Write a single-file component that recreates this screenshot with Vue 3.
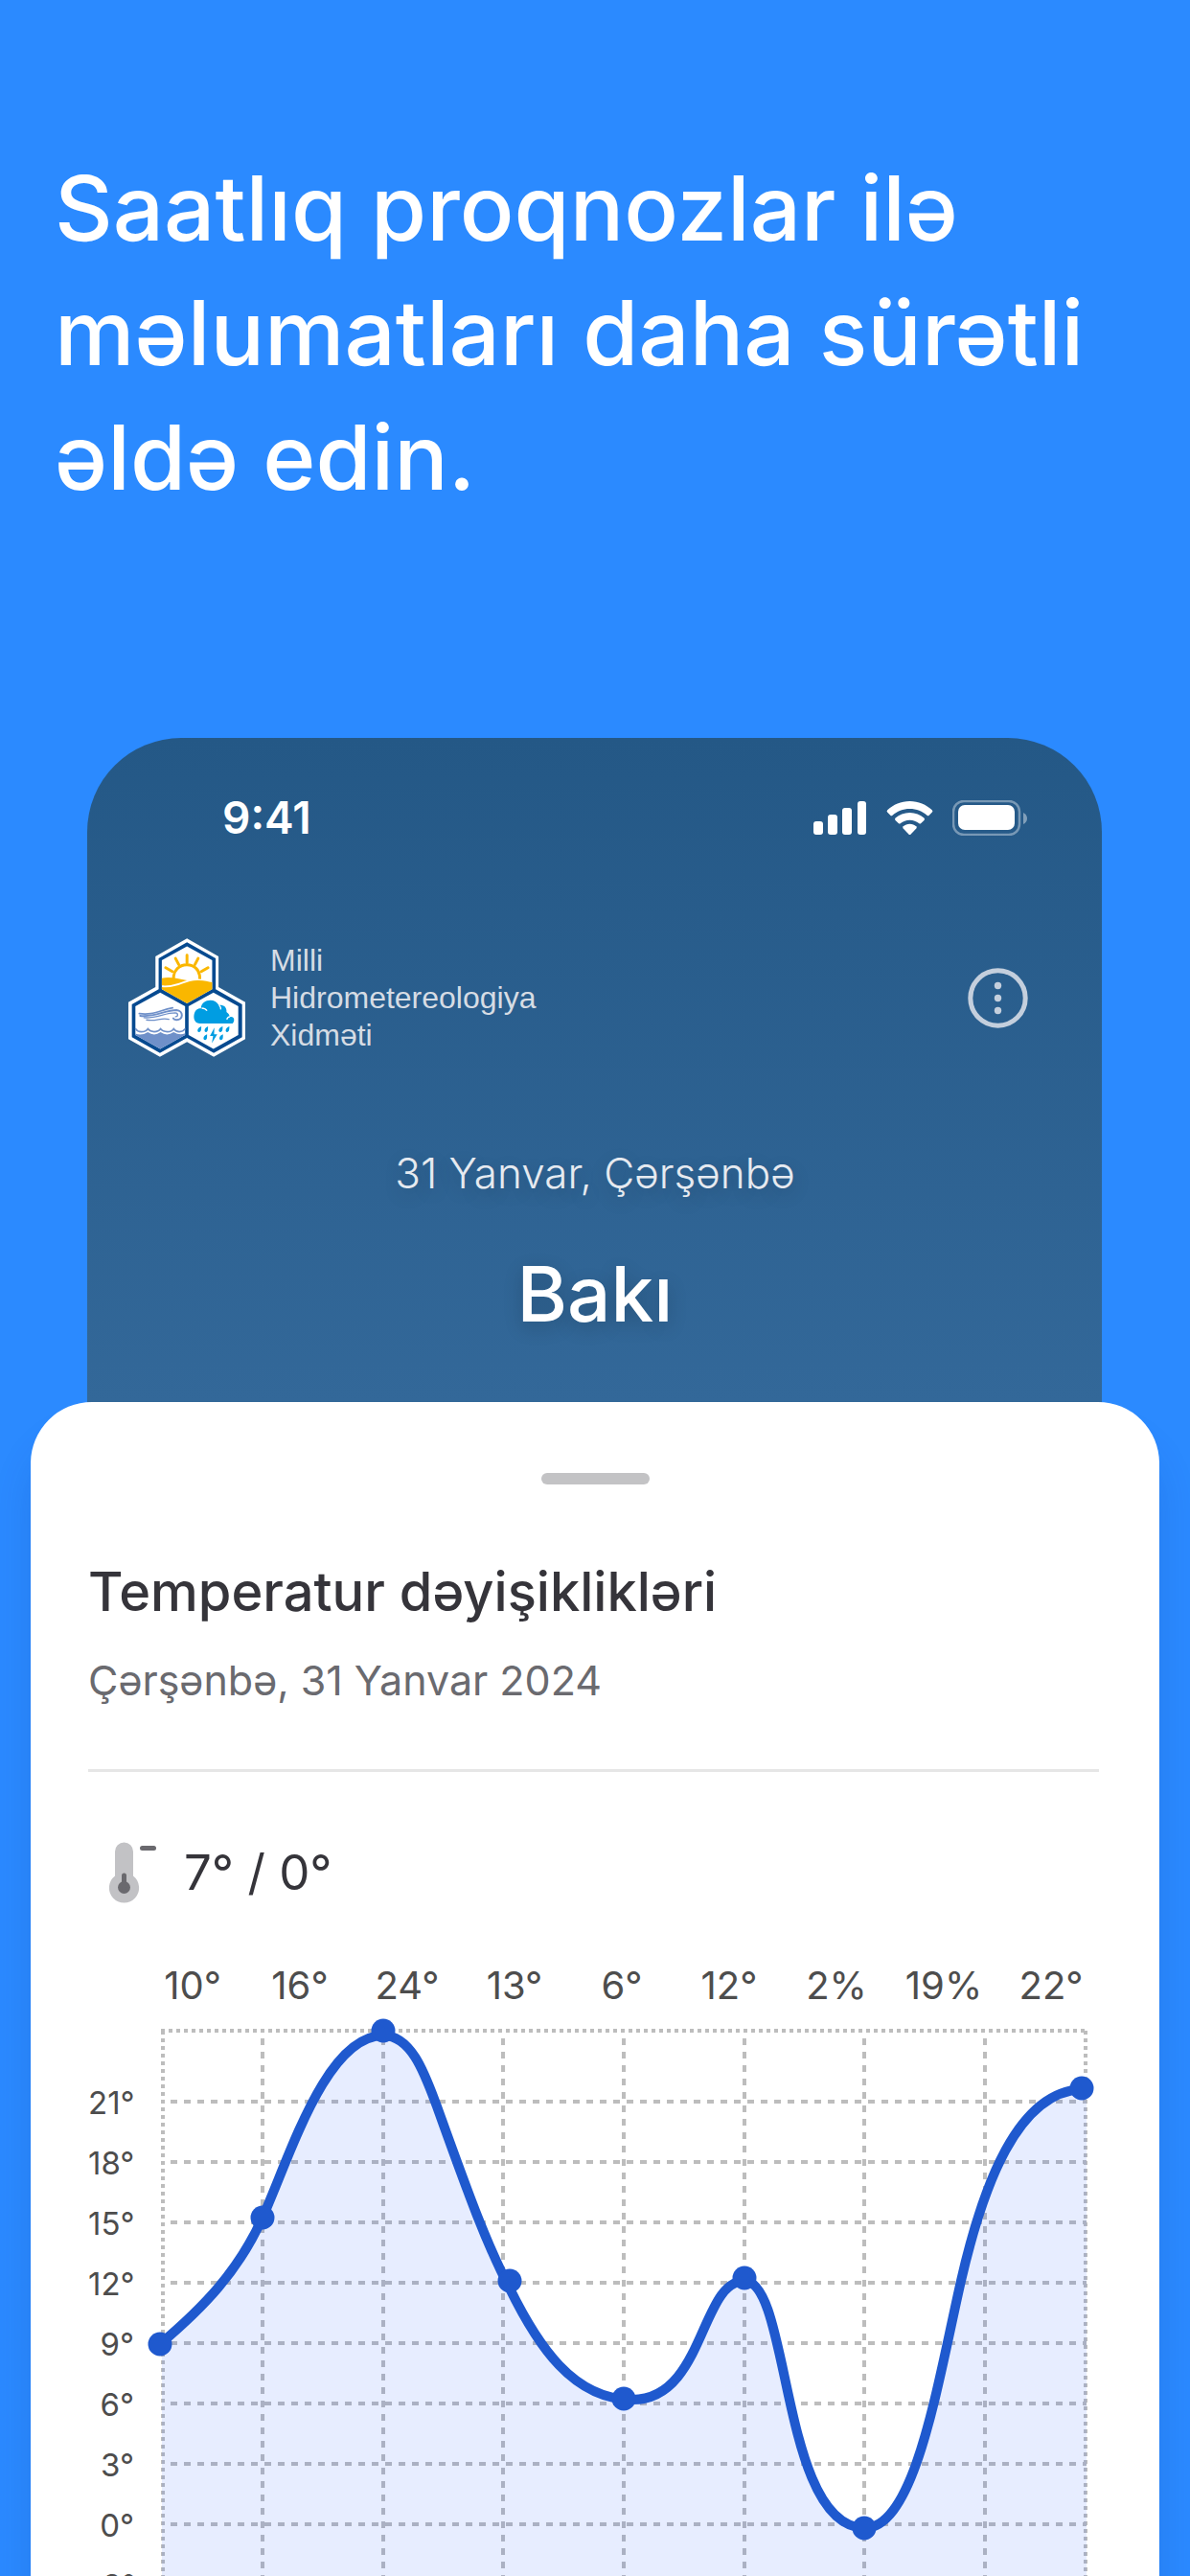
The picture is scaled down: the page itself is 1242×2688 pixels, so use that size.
<script setup>
import { ref } from 'vue'

const headline = ['Saatlıq proqnozlar ilə', 'məlumatları daha sürətli', 'əldə edin.']
const organisation = ['Milli', 'Hidrometereologiya', 'Xidməti']
const hours = ['10°', '16°', '24°', '13°', '6°', '12°', '2%', '19%', '22°']
const degrees = ['21°', '18°', '15°', '12°', '9°', '6°', '3°', '0°', '-3°']

const columns = [106, 232, 357, 483, 609, 734, 860]
const rows = [76, 139, 202, 265, 328, 391, 454, 517]
const points = [
  { x: -1, y: 329 },
  { x: 106, y: 197 },
  { x: 232, y: 2 },
  { x: 364, y: 263 },
  { x: 483, y: 386 },
  { x: 609, y: 260 },
  { x: 734, y: 521 },
  { x: 961, y: 62 }
]
const curve =
  'M-1 329 C44 291 81 253 106 197 C134 135 172 7 232 7 C262 7 276 49 288 81 ' +
  'C319 167 338 221 364 271 C393 330 430 387 492 387 C567 387 563 263 609 263 ' +
  'C657 263 647 519 734 521 C787 521 810 373 835 263 C858 163 894 66 961 63'
const area = curve + ' L966 63 L966 571 L1 571 L1 329 Z'

const menuOpen = ref(false)
const toggleMenu = () => {
  menuOpen.value = !menuOpen.value
}
</script>

<template>
  <main class="page">
    <h1 class="headline">
      <span v-for="line in headline" :key="line">{{ line }}</span>
    </h1>

    <section class="phone">
      <div class="status-bar">
        <time class="clock">9:41</time>
        <div class="status-icons">
          <svg width="56" height="37" viewBox="0 0 56 37" fill="#fff" aria-hidden="true">
            <rect x="0" y="22" width="10" height="14" rx="3" />
            <rect x="15" y="15" width="10" height="21" rx="3" />
            <rect x="30" y="8" width="10" height="28" rx="3" />
            <rect x="46" y="1" width="9" height="35" rx="3" />
          </svg>
          <svg width="49" height="37" viewBox="0 0 49 37" fill="#fff" aria-hidden="true">
            <path
              d="M24.500 1C33.500 1 41.700 4.500 47.800 10.300Q49 11.400 47.900 12.600L44.700 15.800Q43.600 16.800 42.500 15.800C37.800 11.500 31.500 9 24.500 9S11.200 11.500 6.500 15.800Q5.400 16.800 4.300 15.800L1.100 12.600Q0 11.400 1.200 10.300C7.300 4.500 15.500 1 24.500 1Z"
            />
            <path
              d="M24.500 13C30.300 13 35.500 15.100 39.400 18.600Q40.600 19.700 39.500 20.900L36.300 24.100Q35.200 25.100 34 24.100C31.500 22 28.200 20.700 24.500 20.700S17.500 22 15 24.100Q13.800 25.100 12.700 24.100L9.500 20.900Q8.400 19.700 9.600 18.600C13.500 15.100 18.700 13 24.500 13Z"
            />
            <path
              d="M24.500 24.800C27.200 24.800 29.400 25.700 31.200 27.200Q32.400 28.300 31.300 29.500L25.600 35.400Q24.500 36.500 23.400 35.400L17.700 29.500Q16.600 28.300 17.800 27.200C19.600 25.700 21.800 24.800 24.500 24.800Z"
            />
          </svg>
          <svg width="79" height="37" viewBox="0 0 79 37" aria-hidden="true">
            <rect x="1" y="1" width="69" height="35" rx="11" fill="none" stroke="#fff" stroke-opacity=".38" stroke-width="2.500" />
            <rect x="6" y="5" width="59" height="26" rx="7" fill="#fff" />
            <path d="M74 13Q78 15 78 19T74 25Z" fill="#fff" fill-opacity=".42" />
          </svg>
        </div>
      </div>

      <header class="app-header">
        <div class="brand">
          <svg class="logo" viewBox="43 57 367 372" aria-hidden="true">
            <path d="M227 57L326 114V210L410 257V373L311 429L227 382L142 429L43 373V257L128 210V114Z" fill="#fff" />
            <path
              d="M227 69L317 120V217L400 264V367L311 417L227 369L142 417L54 367V264L138 217V120Z"
              fill="#064a90"
            />
            <path d="M227 82L306 126V217L227 261L148 217V126Z" fill="#fff" />
            <path d="M143 227L221 270V360L143 404L65 360V270Z" fill="#fff" />
            <path d="M310 227L388 270V360L310 404L232 360V270Z" fill="#fff" />
            <g fill="none" stroke="#fab700" stroke-linecap="butt">
              <path d="M185 185C181 126 271 124 267 185" stroke-width="9" />
              <path
                d="M227 110V134M191 120L201 139M262 120L252 139M160 149L181 161M293 149L272 161"
                stroke-width="9"
                stroke-linecap="round"
              />
            </g>
            <path d="M148 182C178 176 198 185 227 189C203 196 177 208 148 205Z" fill="#fab700" />
            <path d="M148 210C195 215 223 189 260 189C279 188 293 193 306 195V217L227 261L148 217Z" fill="#fab700" />
            <g fill="none" stroke="#6f90c9" stroke-linecap="round">
              <path d="M77 293C120 299 139 283 182 275" stroke-width="5" />
              <path d="M80 300C126 305 158 282 194 282C217 284 216 313 194 313C188 312 185 310 184 308" stroke-width="6" />
              <path d="M92 306C129 309 158 291 190 291C201 292 199 303 191 303" stroke-width="4" />
              <path d="M100 313C130 319 145 304 170 311" stroke-width="4" />
              <path
                d="M66 341Q71 350 83 350Q99 350 104 341Q111 350 124 350Q138 350 144 341Q151 350 165 350Q180 350 185 341Q191 350 203 350Q215 350 220 342"
                stroke-width="5"
              />
            </g>
            <path
              d="M65 356Q85 363 104 351Q124 366 144 351Q164 366 185 351Q204 363 221 355V360L143 404L65 360Z"
              fill="#6f90c9"
            />
            <path
              d="M268 324C253 324 247 312 249 298C251 284 260 276 271 277C270 250 314 240 327 267C343 263 353 276 351 288Q359 292 362 304C375 300 379 316 370 324Z"
              fill="#009de2"
            />
            <path d="M273 276Q284 276 290 284M328 267Q334 273 333 280M362 303Q354 304 352 312" fill="none" stroke="#fff" stroke-width="4" />
            <g fill="#009de2">
              <path
                d="M272 333C259 338 257 350 265 351C272 350 272 342 272 333ZM293 333C281 338 279 350 287 351C293 350 293 342 293 333ZM339 333C325 338 324 350 332 351C339 350 339 342 339 333ZM360 333C347 338 346 350 353 351C360 350 360 342 360 333ZM290 358C277 363 276 375 284 376C291 375 290 367 290 358ZM340 358C327 363 326 375 334 376C341 375 340 367 340 358Z"
              />
              <path d="M313 337L299 363H309L305 386L322 358H312Z" />
            </g>
          </svg>
          <p class="brand-name">
            <span v-for="word in organisation" :key="word">{{ word }}</span>
          </p>
        </div>
        <button type="button" class="menu-button" aria-label="Menyu" :aria-expanded="menuOpen" @click="toggleMenu">
          <svg width="63" height="63" viewBox="0 0 63 63" fill="#c4cfdd">
            <circle cx="31.500" cy="31.500" r="28.700" fill="none" stroke="#c4cfdd" stroke-width="5" />
            <circle cx="31.500" cy="18.500" r="3.700" />
            <circle cx="31.500" cy="31.500" r="3.700" />
            <circle cx="31.500" cy="44.500" r="3.700" />
          </svg>
        </button>
      </header>

      <p class="today">31 Yanvar, Çərşənbə</p>
      <h2 class="city">Bakı</h2>
    </section>

    <section class="sheet">
      <div class="handle"></div>
      <h2 class="sheet-title">Temperatur dəyişiklikləri</h2>
      <p class="sheet-date">Çərşənbə, 31 Yanvar 2024</p>
      <hr class="divider" />

      <div class="range">
        <svg width="52" height="64" viewBox="0 0 52 64" aria-hidden="true">
          <path d="M6 10A9.500 9.500 0 0 1 25 10V35.500A15.600 15.600 0 1 1 6 35.500Z" fill="#c2c2c5" />
          <circle cx="15.500" cy="47.500" r="6.500" fill="#6a696e" />
          <path d="M15.500 47V35" stroke="#6a696e" stroke-width="5" stroke-linecap="round" />
          <path d="M34.500 6.500H46.500" stroke="#6a696e" stroke-width="5" stroke-linecap="round" />
        </svg>
        <span>7° / 0°</span>
      </div>

      <div class="hours">
        <span v-for="hour in hours" :key="hour">{{ hour }}</span>
      </div>

      <div class="chart">
        <div class="degrees">
          <span v-for="degree in degrees" :key="degree">{{ degree }}</span>
        </div>
        <svg class="plot" viewBox="0 0 966 571" aria-hidden="true">
          <g fill="none" stroke="#bdbdbd" stroke-width="4">
            <path d="M0 2H966" stroke-dasharray="4 4" />
            <path d="M2 2V571M965 2V571" stroke-dasharray="4 4" />
            <path v-for="x in columns" :key="'c' + x" :d="`M${x} 10V571`" stroke-dasharray="7 7" />
            <path v-for="y in rows" :key="'r' + y" :d="`M10 ${y}H966`" stroke-dasharray="7 7" />
          </g>
          <path :d="area" fill="#0f4bff" fill-opacity=".1" />
          <path :d="curve" fill="none" stroke="#1f59ce" stroke-width="10" />
          <circle v-for="point in points" :key="point.x" :cx="point.x" :cy="point.y" r="12.500" fill="#1f59ce" />
        </svg>
      </div>
    </section>
  </main>
</template>

<style>
body {
  margin: 0;
  background: #2b8aff;
}
</style>

<style scoped>
.page {
  box-sizing: border-box;
  height: 100vh;
  overflow: hidden;
  padding: 152px 32px 0;
  display: flex;
  flex-direction: column;
  background: #2b8aff;
  font-family: Inter, 'Noto Sans', sans-serif;
}

h1,
h2,
p {
  margin: 0;
}

.headline {
  padding: 0 25px;
  color: #fff;
  font-size: 94px;
  font-weight: 500;
  line-height: 130px;
}

.headline span,
.brand-name span {
  display: block;
}

.phone {
  flex: none;
  box-sizing: border-box;
  height: 693px;
  margin: 228px 60px 0 59px;
  padding: 62px 77px 0 43px;
  border-radius: 98px 98px 0 0;
  background: linear-gradient(#245886, #336899);
  color: #fff;
}

.status-bar {
  display: flex;
  align-items: center;
  justify-content: space-between;
  height: 42px;
  padding-left: 98px;
}

.clock {
  font-size: 46px;
  font-weight: 600;
  line-height: 42px;
}

.status-icons {
  display: flex;
  gap: 20px;
}

.app-header {
  display: flex;
  align-items: center;
  justify-content: space-between;
  margin-top: 105px;
}

.brand {
  display: flex;
  align-items: center;
  gap: 26px;
}

.logo {
  width: 122px;
  height: 124px;
}

.brand-name {
  color: #d6dce4;
  font-family: 'Liberation Sans', Arial, sans-serif;
  font-size: 32px;
  line-height: 39px;
}

.menu-button {
  width: 63px;
  height: 63px;
  padding: 0;
  border: 0;
  background: none;
  cursor: pointer;
}

.menu-button svg {
  display: block;
}

.today,
.city {
  padding-left: 35px;
  text-align: center;
  text-shadow: 0 6px 20px rgba(0, 0, 0, 0.2);
}

.today {
  margin-top: 93px;
  color: #e6eaf0;
  font-size: 44px;
  font-weight: 300;
  line-height: 56px;
}

.city {
  margin-top: 48px;
  font-size: 80px;
  font-weight: 500;
  line-height: 100px;
}

.sheet {
  flex: none;
  padding: 74px 60px 0;
  border-radius: 64px 64px 0 0;
  background: #fff;
  box-shadow: 0 40px 40px rgba(0, 50, 140, 0.16);
  color: #35343a;
}

.handle {
  width: 113px;
  height: 12px;
  margin: 0 auto;
  border-radius: 6px;
  background: #c3c3c5;
}

.sheet-title {
  margin-top: 76px;
  font-size: 56px;
  font-weight: 500;
  line-height: 72px;
}

.sheet-date {
  margin-top: 28px;
  color: #6a6a6f;
  font-size: 43px;
  font-weight: 400;
  line-height: 56px;
}

.divider {
  height: 3px;
  margin: 65px 3px 0 0;
  border: 0;
  background: #e6e6e6;
}

.range {
  display: flex;
  align-items: center;
  gap: 26px;
  margin-top: 73px;
  padding-left: 22px;
  font-size: 51px;
  line-height: 64px;
}

.hours {
  display: grid;
  grid-template-columns: repeat(9, 1fr);
  margin: 62px -3px 0 53px;
  color: #4d4d4d;
  font-size: 40px;
  line-height: 48px;
  text-align: center;
}

.chart {
  display: flex;
  margin-top: 21px;
  padding-right: 16px;
}

.degrees {
  flex: none;
  display: flex;
  flex-direction: column;
  box-sizing: border-box;
  width: 76px;
  height: 571px;
  padding: 46px 28px 0 0;
  color: #4d4d4d;
  font-size: 33px;
  line-height: 63px;
  text-align: right;
}

.plot {
  flex: 1;
  min-width: 0;
  overflow: visible;
}
</style>
